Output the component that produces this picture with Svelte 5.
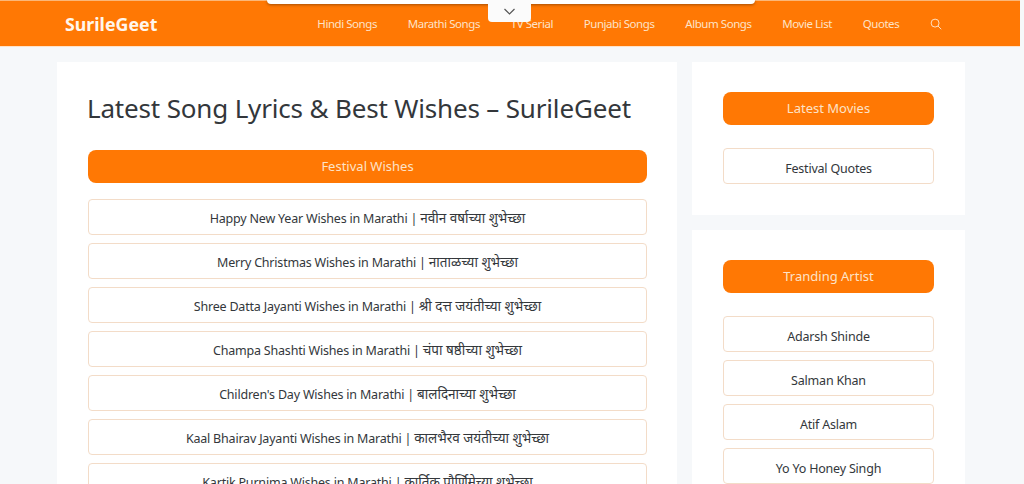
<script>
	const navItems = ['Hindi Songs', 'Marathi Songs', 'TV Serial', 'Punjabi Songs', 'Album Songs', 'Movie List', 'Quotes'];

	const wishes = [
		['Happy New Year Wishes in Marathi', 'नवीन वर्षाच्या शुभेच्छा'],
		['Merry Christmas Wishes in Marathi', 'नाताळच्या शुभेच्छा'],
		['Shree Datta Jayanti Wishes in Marathi', 'श्री दत्त जयंतीच्या शुभेच्छा'],
		['Champa Shashti Wishes in Marathi', 'चंपा षष्ठीच्या शुभेच्छा'],
		["Children's Day Wishes in Marathi", 'बालदिनाच्या शुभेच्छा'],
		['Kaal Bhairav Jayanti Wishes in Marathi', 'कालभैरव जयंतीच्या शुभेच्छा'],
		['Kartik Purnima Wishes in Marathi', 'कार्तिक पौर्णिमेच्या शुभेच्छा']
	];

	const artists = ['Adarsh Shinde', 'Salman Khan', 'Atif Aslam', 'Yo Yo Honey Singh'];
</script>

<div class="page">
	<header class="topbar">
		<a class="brand" href="#top">SurileGeet</a>
		<nav class="nav">
			{#each navItems as item}
				<a href="#top">{item}</a>
			{/each}
			<svg class="search" viewBox="0 0 16 16" width="12" height="12" fill="none" stroke="currentColor" stroke-width="1.3">
				<circle cx="6.8" cy="6.8" r="5.3" />
				<path d="M10.7 10.7 15 15" />
			</svg>
		</nav>
	</header>

	<div class="overlay-bar"></div>
	<div class="overlay-tab">
		<svg viewBox="0 0 12 7" width="13" height="7" fill="none" stroke="#555" stroke-width="1.2">
			<path d="M1 1l5 5 5-5" />
		</svg>
	</div>

	<div class="content">
		<main class="card main">
			<h1>Latest Song Lyrics &amp; Best Wishes – SurileGeet</h1>
			<div class="heading">Festival Wishes</div>
			<div class="rows">
				{#each wishes as [english, marathi]}
					<a class="row" href="#top">
						<span>{english} | <span class="mr">{marathi}</span></span>
					</a>
				{/each}
			</div>
		</main>

		<aside class="side">
			<section class="card">
				<div class="heading">Latest Movies</div>
				<div class="rows">
					<a class="row" href="#top"><span>Festival Quotes</span></a>
				</div>
			</section>
			<section class="card">
				<div class="heading">Tranding Artist</div>
				<div class="rows">
					{#each artists as artist}
						<a class="row" href="#top"><span>{artist}</span></a>
					{/each}
				</div>
			</section>
		</aside>
	</div>
</div>

<style>
	:global(body) {
		margin: 0;
		background: #f6f8fa;
		overflow: hidden;
	}

	.page {
		position: relative;
		height: 484px;
		overflow: hidden;
		font-family: 'Noto Sans', 'Open Sans', sans-serif;
		color: #33373b;
	}

	a {
		text-decoration: none;
		color: inherit;
	}

	.topbar {
		height: 46px;
		margin-right: 4px;
		padding: 0 57px 0 65px;
		box-sizing: border-box;
		display: flex;
		align-items: center;
		justify-content: space-between;
		background: #ff7804;
		border-top: 1px solid #fbb778;
		box-shadow: 0 1px 0 #ffe3c8;
		color: #fff;
	}

	.brand {
		font-size: 17.8px;
		font-weight: 700;
		color: #fff6ec;
	}

	.nav {
		display: flex;
		align-items: center;
		gap: 30.8px;
		font-size: 11.5px;
		letter-spacing: -0.45px;
		color: #fde3c8;
	}

	.search {
		margin-right: 21px;
	}

	.overlay-bar {
		position: absolute;
		left: 267px;
		top: 0;
		width: 488px;
		height: 4px;
		background: #fff;
		border-radius: 0 0 4px 4px;
		box-shadow: 0 1px 3px rgba(0, 0, 0, 0.35);
	}

	.overlay-tab {
		position: absolute;
		left: 488px;
		top: 0;
		width: 43px;
		height: 22px;
		display: flex;
		align-items: center;
		justify-content: center;
		background: #fbfbfb;
		border-radius: 0 0 4px 4px;
	}

	.content {
		display: flex;
		align-items: flex-start;
		gap: 15px;
		padding: 16px 0 0 57px;
	}

	.card {
		padding: 30px 31px;
		background: #fff;
	}

	.main {
		width: 620px;
		box-sizing: border-box;
		padding-right: 30px;
	}

	h1 {
		margin: 0 0 26px -1px;
		font-size: 26px;
		font-weight: 400;
		line-height: 32px;
		letter-spacing: -0.17px;
		white-space: nowrap;
	}

	.heading {
		height: 33px;
		line-height: 33px;
		text-align: center;
		font-size: 13px;
		color: #fde3c8;
		background: #ff7804;
		border-radius: 8px;
	}

	.rows {
		display: flex;
		flex-direction: column;
		gap: 8px;
		margin-top: 16px;
	}

	.row {
		height: 36px;
		box-sizing: border-box;
		display: flex;
		align-items: center;
		justify-content: center;
		padding-top: 1px;
		border: 1px solid #f3dcc8;
		border-radius: 4px;
		font-size: 12.5px;
		letter-spacing: -0.2px;
	}

	.mr {
		font-size: 13.5px;
		letter-spacing: 0;
	}

	.side {
		width: 273px;
		display: flex;
		flex-direction: column;
		gap: 15px;
	}

	.side .card {
		box-sizing: border-box;
		padding-right: 31px;
	}

	.side .card:first-child {
		height: 153px;
	}

	.side .rows {
		margin-top: 23px;
	}

	.side .row {
		padding-top: 5px;
	}
</style>
